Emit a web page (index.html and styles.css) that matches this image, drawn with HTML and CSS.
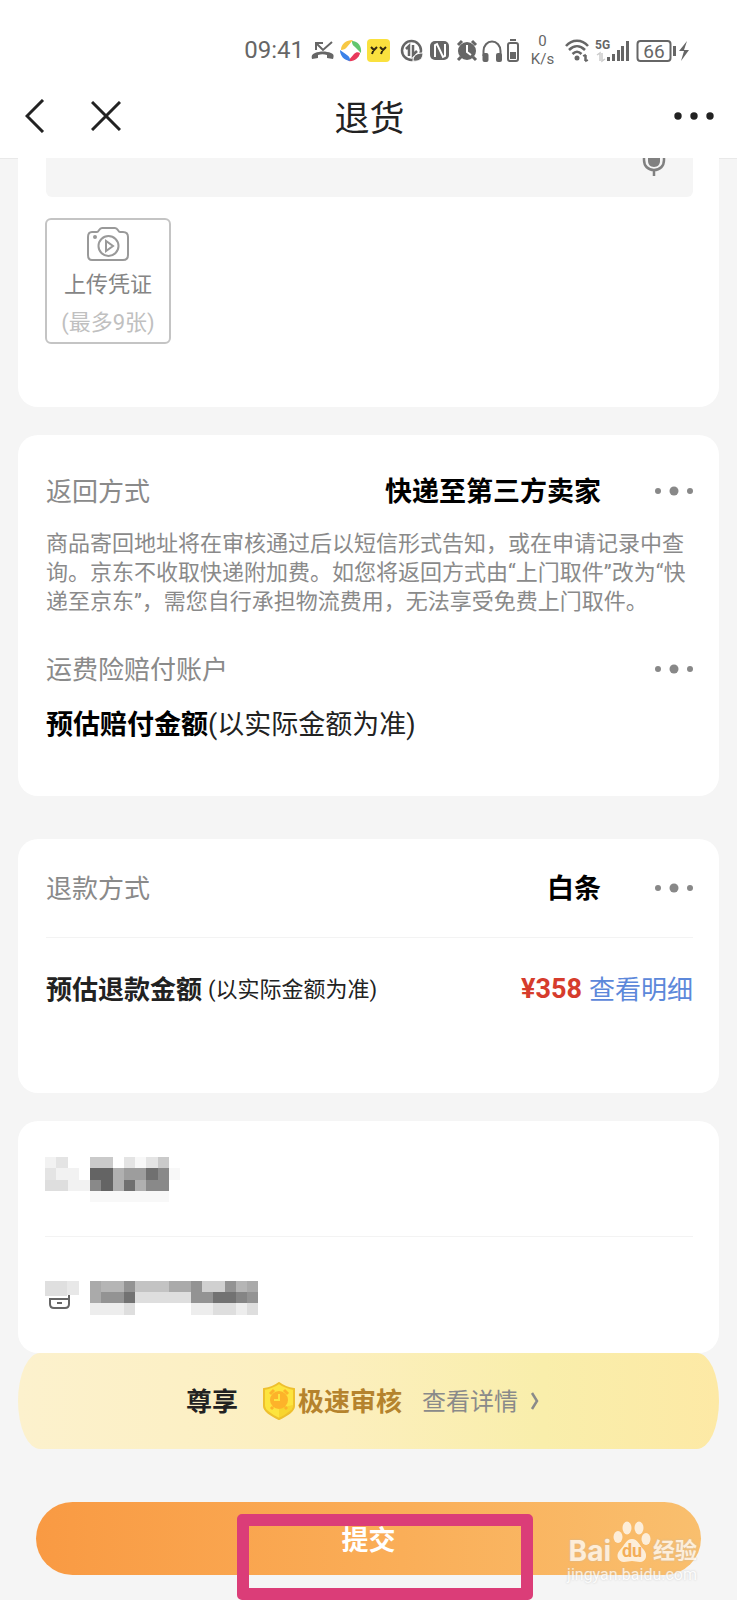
FILE: index.html
```html
<!DOCTYPE html>
<html lang="zh-CN">
<head>
<meta charset="utf-8">
<meta name="viewport" content="width=device-width, initial-scale=1">
<title>退货</title>
<link rel="stylesheet" href="styles.css">
</head>
<body>
<header class="top">
  <div class="status">
    <span class="clock">09:41</span>
    <svg class="status-icons" width="210" height="28" viewBox="310 36 210 28" aria-hidden="true">
      <g fill="none" stroke="#666" stroke-width="2">
        <path d="M316 43l7 7 9-8M316 50v-7h7"/>
      </g>
      <path fill="#666" d="M312 59c-1-3 0-5 3-6 5-2 11-2 16 0 3 1 3 3 2 6l-6-1v-3c-3-1-6-1-9 0v3z"/>
      <path fill="#f7c844" d="M341 50c0-6 5-10 12-10l-6 7c-1 2-4 3-6 3z"/>
      <path fill="#62c56e" d="M352 41c6 0 10 5 9 12l-6-6c-3-2-3-4-3-6z"/>
      <path fill="#e8395a" d="M360 53c-1 5-6 9-12 8l6-7c2-2 4-2 6-1z"/>
      <path fill="#3b82e8" d="M350 61c-6-1-10-5-10-11l7 5c3 2 3 4 3 6z"/>
      <rect x="367" y="39" width="23" height="23" rx="4" fill="#fae13e"/>
      <path fill="none" stroke="#332b10" stroke-width="2" d="M371 47l3 3 3-3M374 49l-2 5M380 47l3 3 3-3M383 49l-2 5"/>
      <circle cx="411.500" cy="50.500" r="9.500" fill="none" stroke="#666" stroke-width="2.500"/>
      <path fill="none" stroke="#666" stroke-width="2.500" d="M406 49l3-3v10M413 45v10l4-4"/>
      <path fill="#666" stroke="#fff" d="M413 61c0-6 4-8 10-8 0 6-4 9-10 8z"/>
      <rect x="430" y="41" width="19" height="19" rx="5" fill="#666"/>
      <path fill="none" stroke="#fff" stroke-width="2" d="M435 57V45l2-1 6 13 2-1V44"/>
      <circle cx="467" cy="51" r="9" fill="#666"/>
      <path fill="none" stroke="#666" stroke-width="3" d="M458 45l4-4M472 41l4 4M461 57l-3 3M473 57l3 3"/>
      <path fill="none" stroke="#fff" stroke-width="2" d="M467 45v7l4 3"/>
      <path fill="none" stroke="#666" stroke-width="2" d="M483.500 56v-5a8.500 9.500 0 0 1 17 0v5"/>
      <rect x="482.500" y="53" width="6" height="9" rx="2" fill="#666"/><rect x="496" y="53" width="6" height="9" rx="2" fill="#666"/>
      <rect x="508" y="43" width="10" height="18" rx="2" fill="none" stroke="#666" stroke-width="2"/>
      <path fill="#666" d="M510 39h6v2h-6zM510 52h6v7h-6z"/>
    </svg>
    <span class="speed"><span>0</span><span>K/s</span></span>
    <svg class="status-icons" width="125" height="28" viewBox="565 36 125 28" aria-hidden="true">
      <g fill="none" stroke="#666" stroke-width="2.500">
        <path d="M566 46c6-7 16-7 22 0M569 50c5-5 11-5 16 0M572.500 54c3-3 6-3 9 0"/>
      </g>
      <circle cx="577" cy="58" r="2.500" fill="#666"/>
      <path fill="none" stroke="#666" stroke-width="1.500" d="M583 56l2-1v6M588 60l-2 1v-6"/>
      <text x="595" y="49" class="tiny-text">5G</text>
      <path fill="none" stroke="#ccc" stroke-width="1.500" d="M597 55l3-2v8M602 53v8l3-2"/>
      <path fill="#666" d="M607 57h3v4h-3zM612 54h3v7h-3zM617 50h3v11h-3zM621 46h3v15h-3zM626 41h3v20h-3z"/>
      <rect x="637.500" y="41" width="33" height="20" rx="3" fill="none" stroke="#666" stroke-width="2"/>
      <text x="654" y="58" text-anchor="middle" class="battery-text">66</text>
      <path fill="#666" d="M673 46h3v10h-3zM687 41l-8 10h5l-3 10 8-11h-5z"/>
    </svg>
  </div>
  <nav class="nav">
    <div class="nav-side">
      <button class="icon-btn" aria-label="返回"><svg width="20" height="34" viewBox="0 0 20 34"><path d="M18 1L2 17l16 16" fill="none" stroke="#222" stroke-width="3"/></svg></button>
      <button class="icon-btn" aria-label="关闭"><svg width="30" height="30" viewBox="0 0 30 30"><path d="M1 1l28 28M29 1L1 29" fill="none" stroke="#222" stroke-width="3"/></svg></button>
    </div>
    <h1 class="title">退货</h1>
    <div class="nav-side nav-end">
      <button class="icon-btn" aria-label="更多"><svg width="40" height="10" viewBox="0 0 40 10" fill="#222"><circle cx="4" cy="5" r="3.700"/><circle cx="20" cy="5" r="3.700"/><circle cx="36" cy="5" r="3.700"/></svg></button>
    </div>
  </nav>
</header>

<main class="content">
  <section class="card card-upload">
    <div class="note">
      <textarea class="note-input" aria-label="问题描述"></textarea>
      <button class="icon-btn mic" aria-label="语音输入"><svg width="24" height="18" viewBox="0 0 24 18"><path fill="#808080" d="M6 0h12v3c0 3-2 6-6 6s-6-3-6-6z"/><path fill="none" stroke="#808080" stroke-width="2.500" d="M2 0v2c0 6 4 10 10 10s10-4 10-10V0M12 12v6"/></svg></button>
    </div>
    <button class="upload">
      <svg width="44" height="36" viewBox="0 0 44 36" fill="none" stroke="#999" stroke-width="2"><path d="M6 6h5c2 0 2-4 5-4h13c3 0 3 4 5 4h3c3 0 5 2 5 5v18c0 3-2 5-5 5H6c-3 0-4-2-4-5V11c0-3 1-5 4-5z"/><circle cx="22.500" cy="20" r="10"/><path d="M20 15v10l7-5z"/><circle cx="9" cy="11" r="1" fill="#999"/></svg>
      <span class="upload-name">上传凭证</span>
      <span class="upload-limit">(最多9张)</span>
    </button>
  </section>

  <section class="card card-return">
    <div class="row">
      <span class="label">返回方式</span>
      <strong class="value">快递至第三方卖家</strong>
      <button class="icon-btn" aria-label="更改返回方式"><svg width="38" height="10" viewBox="0 0 38 10" fill="#888"><circle cx="3" cy="5" r="3"/><circle cx="19" cy="5" r="4.500"/><circle cx="35" cy="5" r="3"/></svg></button>
    </div>
    <p class="hint">商品寄回地址将在审核通过后以短信形式告知，或在申请记录中查询。京东不收取快递附加费。如您将返回方式由“上门取件”改为“快递至京东”，需您自行承担物流费用，无法享受免费上门取件。</p>
    <div class="row">
      <span class="label">运费险赔付账户</span>
      <button class="icon-btn" aria-label="更改赔付账户"><svg width="38" height="10" viewBox="0 0 38 10" fill="#888"><circle cx="3" cy="5" r="3"/><circle cx="19" cy="5" r="4.500"/><circle cx="35" cy="5" r="3"/></svg></button>
    </div>
    <p class="estimate"><strong>预估赔付金额</strong>(以实际金额为准)</p>
  </section>

  <section class="card card-refund">
    <div class="row refund-row">
      <span class="label">退款方式</span>
      <strong class="value">白条</strong>
      <button class="icon-btn" aria-label="更改退款方式"><svg width="38" height="10" viewBox="0 0 38 10" fill="#888"><circle cx="3" cy="5" r="3"/><circle cx="19" cy="5" r="4.500"/><circle cx="35" cy="5" r="3"/></svg></button>
    </div>
    <div class="row amount-row">
      <strong class="amount-label">预估退款金额</strong>
      <span class="amount-note">(以实际金额为准)</span>
      <strong class="price">¥358</strong>
      <a class="link" href="#">查看明细</a>
    </div>
  </section>

  <section class="card card-contact">
    <div class="contact contact-name">
      <svg width="135" height="45" viewBox="0 0 12 4" preserveAspectRatio="none" shape-rendering="crispEdges" role="img" aria-label="联系人">
        <path fill="#f2f2f2" d="M0 0h1v1H0zM1 1h1v1H1zM2 2h2v1H2zM2 1h1v1H2z"/><path fill="#e4e4e4" d="M1 0h1v1H1zM0 1h1v1H0zM7 0h1v1H7zM9 0h1v1H9z"/><path fill="#dedede" d="M0 2h2v1H0z"/>
        <path fill="#cacaca" d="M4 0h2v1H4zM10 0h1v1h-1z"/><path fill="#f8f8f8" d="M8 0h1v1H8zM11 1h1v1h-1zM4 3h7v1H4z"/>
        <path fill="#646464" d="M4 1h1v1H4zM5 1h1v2H5z"/><path fill="#b0b0b0" d="M6 1h1v2H6zM8 2h1v1H8z"/><path fill="#9d9d9d" d="M7 1h2v1H7z"/><path fill="#898989" d="M4 2h1v1H4zM10 1h1v2h-1zM9 2h1v1H9z"/><path fill="#707070" d="M9 1h1v1H9zM7 2h1v1H7z"/>
      </svg>
    </div>
    <div class="contact contact-phone">
      <svg width="225" height="34" viewBox="0 0 225 34" shape-rendering="crispEdges" role="img" aria-label="联系电话">
        <path fill="none" stroke="#666" stroke-width="2" shape-rendering="auto" d="M24 14v9c0 3-1 4-4 4H9c-3 0-4-1-4-4v-5h19M12 22h5"/>
        <path fill="#dfdfdf" d="M0 0h22v15H0z"/><path fill="#e8e8e8" d="M22 0h12v14H22z"/>
        <path fill="#aaa" d="M45 0h11v22H45zM124 0h22v11h-22zM202 0h11v11h-11z"/><path fill="#b5b5b5" d="M56 0h23v11H56zM191 0h11v11h-11z"/><path fill="#939393" d="M79 0h11v11H79zM56 11h23v11H56zM146 0h11v11h-11zM146 11h22v11h-22zM180 0h11v11h-11zM202 11h11v11h-11z"/><path fill="#c3c3c3" d="M90 0h34v11H90z"/><path fill="#d0d0d0" d="M157 0h23v11h-23z"/>
        <path fill="#727272" d="M79 11h11v11H79zM168 11h23v11h-23z"/><path fill="#858585" d="M191 11h11v11h-11z"/><path fill="#dedede" d="M90 11h56v11H90zM79 22h11v12H79zM168 22h23v12h-23zM202 22h11v12h-11z"/><path fill="#ededed" d="M45 22h34v12H45zM146 22h22v12h-22zM191 22h11v12h-11z"/>
      </svg>
    </div>
  </section>

  <a class="banner" href="#">
    <strong class="banner-lead">尊享</strong>
    <svg class="shield" width="34" height="38" viewBox="0 0 34 38"><path d="M17 1c4 3 9 5 15 6v17c0 5-7 9-15 13C9 33 2 29 2 24V7c6-1 11-3 15-6z" fill="#fde43e" stroke="#eec02e" stroke-width="2"/><path d="M17 36V26l14-3c0 5-6 9-14 13z" fill="#f3c51f" opacity=".5"/><circle cx="17" cy="18" r="9" fill="#fdb32a"/><path d="M8 12l4-4M22 8l4 4M11 25l-2 2M23 25l2 2" stroke="#fdb32a" stroke-width="3"/><path d="M17 12v6h-5" fill="none" stroke="#fde43e" stroke-width="2"/></svg>
    <strong class="banner-name">极速审核</strong>
    <span class="banner-more">查看详情</span>
    <svg width="9" height="18" viewBox="0 0 9 18"><path d="M2 1l5 8-5 8" fill="none" stroke="#8a8a8a" stroke-width="2.500"/></svg>
  </a>

  <div class="submit-area">
    <button class="submit">提交</button>
    <div class="marker"></div>
    <div class="watermark">
      <div class="brand">
        <span class="brand-latin">Bai</span>
        <span class="paw"><svg width="38" height="42" viewBox="0 0 38 42" fill="#fff"><ellipse cx="5" cy="16" rx="4.500" ry="6"/><ellipse cx="14" cy="7" rx="4.500" ry="6.500"/><ellipse cx="26" cy="7" rx="4.500" ry="6.500"/><ellipse cx="33" cy="18" rx="4.500" ry="6"/><path d="M19 18c6 0 7 6 12 11 4 5 2 12-4 12-3 0-5-1-8-1s-5 1-8 1c-6 0-9-7-4-12 5-5 6-11 12-11z"/></svg><span class="paw-text">du</span></span>
        <span class="brand-cn">经验</span>
      </div>
      <span class="site">jingyan.baidu.com</span>
    </div>
  </div>
</main>
</body>
</html>
```

FILE: styles.css
```css
* { box-sizing: border-box; }

body {
  margin: 0;
  background: #f5f5f5;
  color: #222;
  font-family: Roboto, "Noto Sans CJK SC", sans-serif;
  font-size: 26px;
}

h1, p { margin: 0; }
button { font: inherit; color: inherit; }
a { text-decoration: none; }
svg { display: block; flex: none; }

.icon-btn {
  display: block;
  padding: 0;
  border: 0;
  background: none;
}

.top {
  background: #fff;
  border-bottom: 1px solid #e9e9e9;
}

.status {
  display: flex;
  align-items: center;
  justify-content: flex-end;
  height: 74px;
  padding: 26px 47px 0 0;
  color: #666;
}
.clock { font-size: 24px; margin-right: 6px; }
.speed {
  display: flex;
  flex-direction: column;
  align-items: center;
  width: 45px;
  font-size: 15px;
  line-height: 18px;
}
.tiny-text { font-size: 12px; font-weight: 700; fill: #666; }
.battery-text { font-size: 19px; fill: #666; }

.nav {
  display: flex;
  align-items: center;
  height: 84px;
  padding: 0 23px 0 25px;
}
.nav-side {
  display: flex;
  flex: 1;
  align-items: center;
  gap: 46px;
}
.nav-end { justify-content: flex-end; }
.title {
  padding-top: 8px;
  font-size: 35px;
  font-weight: 400;
  line-height: 48px;
}

.content { padding: 0 18px; }

.card {
  padding: 0 26px 0 28px;
  border-radius: 20px;
  background: #fff;
}

.card-upload {
  margin-top: -1px;
  padding-bottom: 63px;
  border-radius: 0 0 20px 20px;
}
.note {
  display: flex;
  align-items: flex-start;
  height: 39px;
  padding-right: 27px;
  border-radius: 0 0 6px 6px;
  background: #f5f5f5;
}
.note-input {
  flex: 1;
  height: 39px;
  border: 0;
  background: transparent;
  resize: none;
  font: inherit;
}
.upload {
  display: flex;
  flex-direction: column;
  align-items: center;
  width: 126px;
  height: 126px;
  margin-top: 21px;
  margin-left: -1px;
  padding: 6px 0 0;
  border: 2px solid #c4c4c4;
  border-radius: 6px;
  background: none;
  font-size: 22px;
  line-height: 38px;
}
.upload-name { margin-top: 4px; color: #858585; }
.upload-limit { color: #c0c0c0; }

.row { display: flex; align-items: center; height: 38px; }
.label, .value, .amount-label, .amount-note, .link { padding-bottom: 4px; }
.label { flex: 1; color: #8a8a8a; }
.value { margin-right: 54px; color: #000; font-size: 27px; }

.card-return {
  margin-top: 28px;
  padding-top: 37px;
  padding-bottom: 51px;
}
.hint {
  margin: 19px 0 34px;
  color: #8a8a8a;
  font-size: 22px;
  line-height: 29px;
}
.estimate {
  margin-top: 17px;
  font-size: 27px;
  line-height: 40px;
}
.estimate strong { color: #000; }

.card-refund {
  height: 254px;
  margin-top: 43px;
}
.refund-row { height: 99px; border-bottom: 1px solid #f3f3f3; }
.amount-row { height: 102px; }
.amount-label { margin-right: 6px; }
.amount-note { flex: 1; font-size: 22px; }
.price { margin-right: 7px; color: #d63c2c; font-size: 27px; }
.link { color: #5c88da; }

.card-contact { margin-top: 28px; }
.contact { display: flex; align-items: flex-start; margin-left: -1px; height: 116px; }
.contact-name { padding-top: 36px; border-bottom: 1px solid #f3f3f3; }
.contact-phone { padding-top: 44px; }

.banner {
  display: flex;
  align-items: center;
  justify-content: center;
  height: 96px;
  border-radius: 22px / 48px;
  background: linear-gradient(90deg, #fcf1cd, #fcefbe 45%, #f9eeab 75%, #fde9a5);
  padding-right: 12px;
}
.banner-lead, .banner-name, .banner-more { padding-bottom: 3px; }
.banner-lead { color: #222; }
.shield { margin-left: 24px; }
.banner-name { margin-left: 2px; color: #b5832d; }
.banner-more { margin: 0 12px 0 20px; color: #8a8a8a; font-size: 24px; }

.submit-area {
  position: relative;
  height: 151px;
  padding: 53px 18px 0;
}
.submit {
  display: block;
  width: 100%;
  height: 73px;
  padding: 0;
  border: 0;
  border-radius: 37px;
  background: linear-gradient(90deg, #f99a43, #faae58 55%, #f9bf6e);
  color: #fff;
  font-size: 27px;
  font-weight: 700;
}
.marker {
  position: absolute;
  right: 186px;
  bottom: 0;
  width: 296px;
  height: 86px;
  border: 12px solid #db3d78;
  border-radius: 5px;
}
.watermark {
  position: absolute;
  right: 22px;
  bottom: 16px;
  display: flex;
  flex-direction: column;
  align-items: flex-end;
  color: #fff;
  opacity: .75;
  text-shadow: 0 0 2px #bbb;
}
.brand {
  display: flex;
  align-items: flex-end;
  gap: 2px;
  margin-bottom: 3px;
  font-weight: 700;
  line-height: 24px;
}
.brand-latin {
  font-family: Inter, sans-serif;
  font-size: 28px;
}
.brand-cn { font-size: 22px; }
.paw { position: relative; }
.paw-text {
  position: absolute;
  inset: auto 0 0;
  color: #f2a952;
  font-size: 18px;
  text-align: center;
  text-shadow: none;
}
.site { font-size: 16px; line-height: 18px; }
```
